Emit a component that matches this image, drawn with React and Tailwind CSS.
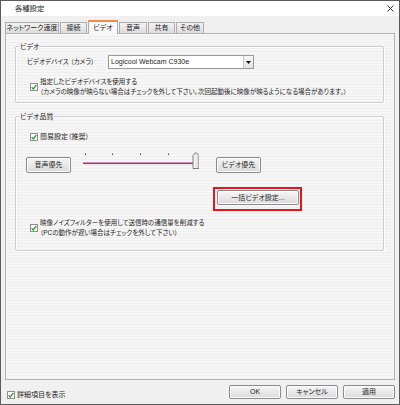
import clsx from 'clsx'

function CheckBox() {
  return (
    <span className="w-[8px] h-[8px] shrink-0 border border-[#8e8f8f] bg-white flex items-center justify-center">
      <svg width="6" height="6" viewBox="0 0 6 6">
        <path d="M0.6 3.1 L2.3 4.9 L5.4 0.9" fill="none" stroke="#2f9a2f" strokeWidth="1.3" />
      </svg>
    </span>
  )
}

function Btn({ children, className }) {
  return (
    <div
      className={clsx(
        'flex items-center justify-center border border-[#8b8b8b] rounded-[2px] bg-linear-to-b from-[#f6f6f6] to-[#dadada] shadow-[inset_0_0_0_1px_#fbfbfb] whitespace-nowrap',
        className
      )}
    >
      {children}
    </div>
  )
}

function Group({ title, className, children }) {
  return (
    <div className={clsx('relative w-[369px] border border-[#cdcdcd] rounded-[2px] shadow-[inset_1px_1px_0_#fff,1px_1px_0_#fff]', className)}>
      {/* legend sits on the top border */}
      <span className="absolute -top-[5px] left-[3px] px-[1px] bg-[#f3f3f3]">{title}</span>
      {children}
    </div>
  )
}

function Tab({ label, active, className }) {
  if (active) {
    return (
      <div
        className={clsx(
          'h-[14px] flex items-center justify-center border-x border-t-2 border-x-[#acacac] border-t-[#f0894a] bg-[#f9f9f9] whitespace-nowrap',
          className
        )}
      >
        {label}
      </div>
    )
  }
  return (
    <div
      className={clsx(
        'h-[11px] mb-[1px] flex items-center justify-center border-x border-t border-[#acacac] bg-linear-to-b from-[#f3f3f3] to-[#dcdcdc] whitespace-nowrap',
        className
      )}
    >
      {label}
    </div>
  )
}

function Slider() {
  const ticks = [3, 30, 58, 86, 112]
  return (
    <svg width="117" height="17" viewBox="0 0 117 17" className="shrink-0">
      {ticks.map((x) => (
        <rect key={x} x={x} y="1.5" width="1" height="1.5" fill="#444" />
      ))}
      <rect x="1" y="10.5" width="112" height="1.6" fill="#a8347f" />
      <defs>
        <linearGradient id="thumb" x1="0" y1="0" x2="1" y2="0">
          <stop offset="0" stopColor="#fdfdfd" />
          <stop offset="1" stopColor="#d6d6d6" />
        </linearGradient>
      </defs>
      <path d="M111.5 16.5 V3.5 L114.5 0.5 L117.5 3.5 V16.5 Z" transform="translate(-0.5 0)" fill="url(#thumb)" stroke="#7c7c7c" strokeWidth="1" />
    </svg>
  )
}

export default function App() {
  const tabs = [
    { label: 'ネットワーク速度', w: 'w-[54px]' },
    { label: '接続', w: 'w-[27px]' },
    { label: 'ビデオ', w: 'w-[30px]', active: true },
    { label: '音声', w: 'w-[28px]' },
    { label: '共有', w: 'w-[27px]' },
    { label: 'その他', w: 'w-[28px]' },
  ]

  return (
    <div className="w-[400px] h-[405px] border border-[#5b5b5b] bg-[#f0f0f0] flex flex-col font-['Liberation_Sans','Noto_Sans_CJK_JP',sans-serif] [font-feature-settings:'palt'] text-[7px] leading-[10px] text-[#1e1e1e]">
      {/* Title bar */}
      <div className="h-[15px] shrink-0 bg-white flex items-center justify-between pl-[14px] pr-[5px]">
        <span className="text-[7.3px]">各種設定</span>
        <svg width="7" height="7" viewBox="0 0 7 7">
          <path d="M0.5 0.5 L6.5 6.5 M6.5 0.5 L0.5 6.5" stroke="#333" strokeWidth="1" />
        </svg>
      </div>

      <div className="flex flex-col px-[4px]">
        {/* Tabs */}
        <div className="relative z-10 mt-[4px] h-[14px] flex items-end gap-[1px]">
          {tabs.map((t) => (
            <Tab key={t.label} label={t.label} active={t.active} className={t.w} />
          ))}
        </div>

        {/* Tab panel */}
        <div className="-mt-[1px] h-[347px] border border-[#b4b4b4] bg-[repeating-linear-gradient(to_bottom,#f6f6f6_0px,#f6f6f6_2px,#eeeeee_2px,#eeeeee_3px)] pl-[9px] flex flex-col">
          <Group title="ビデオ" className="mt-[12px] h-[57px] pt-[8px]">
            <div className="flex items-center pl-[11px]">
              <span className="w-[81px] whitespace-nowrap text-[6.5px]">ビデオデバイス （カメラ）</span>
              <div className="w-[146px] h-[14px] border border-[#9a9a9a] bg-white flex items-center">
                <span className="flex-1 pl-[2px] whitespace-nowrap">Logicool Webcam C930e</span>
                <div className="w-[10px] h-[12px] border-l border-[#c4c4c4] bg-linear-to-b from-[#f7f7f7] to-[#e2e2e2] flex items-center justify-center">
                  <svg width="5" height="3" viewBox="0 0 5 3">
                    <path d="M0 0H5L2.5 3Z" fill="#111" />
                  </svg>
                </div>
              </div>
            </div>
            <div className="flex items-center pl-[14px] mt-[8px]">
              <CheckBox />
              <div className="ml-[2px] whitespace-nowrap text-[6.5px]">
                <div>指定したビデオデバイスを使用する</div>
                <div>（カメラの映像が映らない場合はチェックを外して下さい。次回起動後に映像が映るようになる場合があります。）</div>
              </div>
            </div>
          </Group>

          <Group title="ビデオ品質" className="mt-[13px] h-[135px] pt-[15px] flex flex-col">
            <div className="flex items-center pl-[14px]">
              <CheckBox />
              <span className="ml-[2px]">簡易設定（推奨）</span>
            </div>

            <div className="mt-[10px] h-[22px] flex items-start">
              <Btn className="ml-[10px] mt-[5px] w-[45px] h-[16px]">音声優先</Btn>
              <div className="ml-[11px]">
                <Slider />
              </div>
              <Btn className="ml-[17px] mt-[5px] w-[45px] h-[16px]">ビデオ優先</Btn>
            </div>

            <div className="mt-[13px] ml-[197px] w-fit border-2 border-[#e8141b] pt-[1px] pl-[2px] pr-[1px] pb-[4px]">
              <Btn className="w-[82px] h-[15px]">一括ビデオ設定...</Btn>
            </div>

            <div className="flex items-center pl-[14px] mt-[7px]">
              <CheckBox />
              <div className="ml-[2px] whitespace-nowrap text-[6.5px]">
                <div>映像ノイズフィルターを使用して送信時の通信量を削減する</div>
                <div>（PCの動作が遅い場合はチェックを外して下さい）</div>
              </div>
            </div>
          </Group>
        </div>
      </div>

      {/* Bottom row */}
      <div className="flex-1 flex items-start">
        <div className="mt-[10px] pl-[6px] flex items-center">
          <CheckBox />
          <span className="ml-[2px]">詳細項目を表示</span>
        </div>
        <div className="ml-auto mt-[5px] pr-[4px] flex gap-[5px]">
          <Btn className="w-[52px] h-[14px]">OK</Btn>
          <Btn className="w-[52px] h-[14px]">キャンセル</Btn>
          <Btn className="w-[52px] h-[14px]">適用</Btn>
        </div>
      </div>
    </div>
  )
}
